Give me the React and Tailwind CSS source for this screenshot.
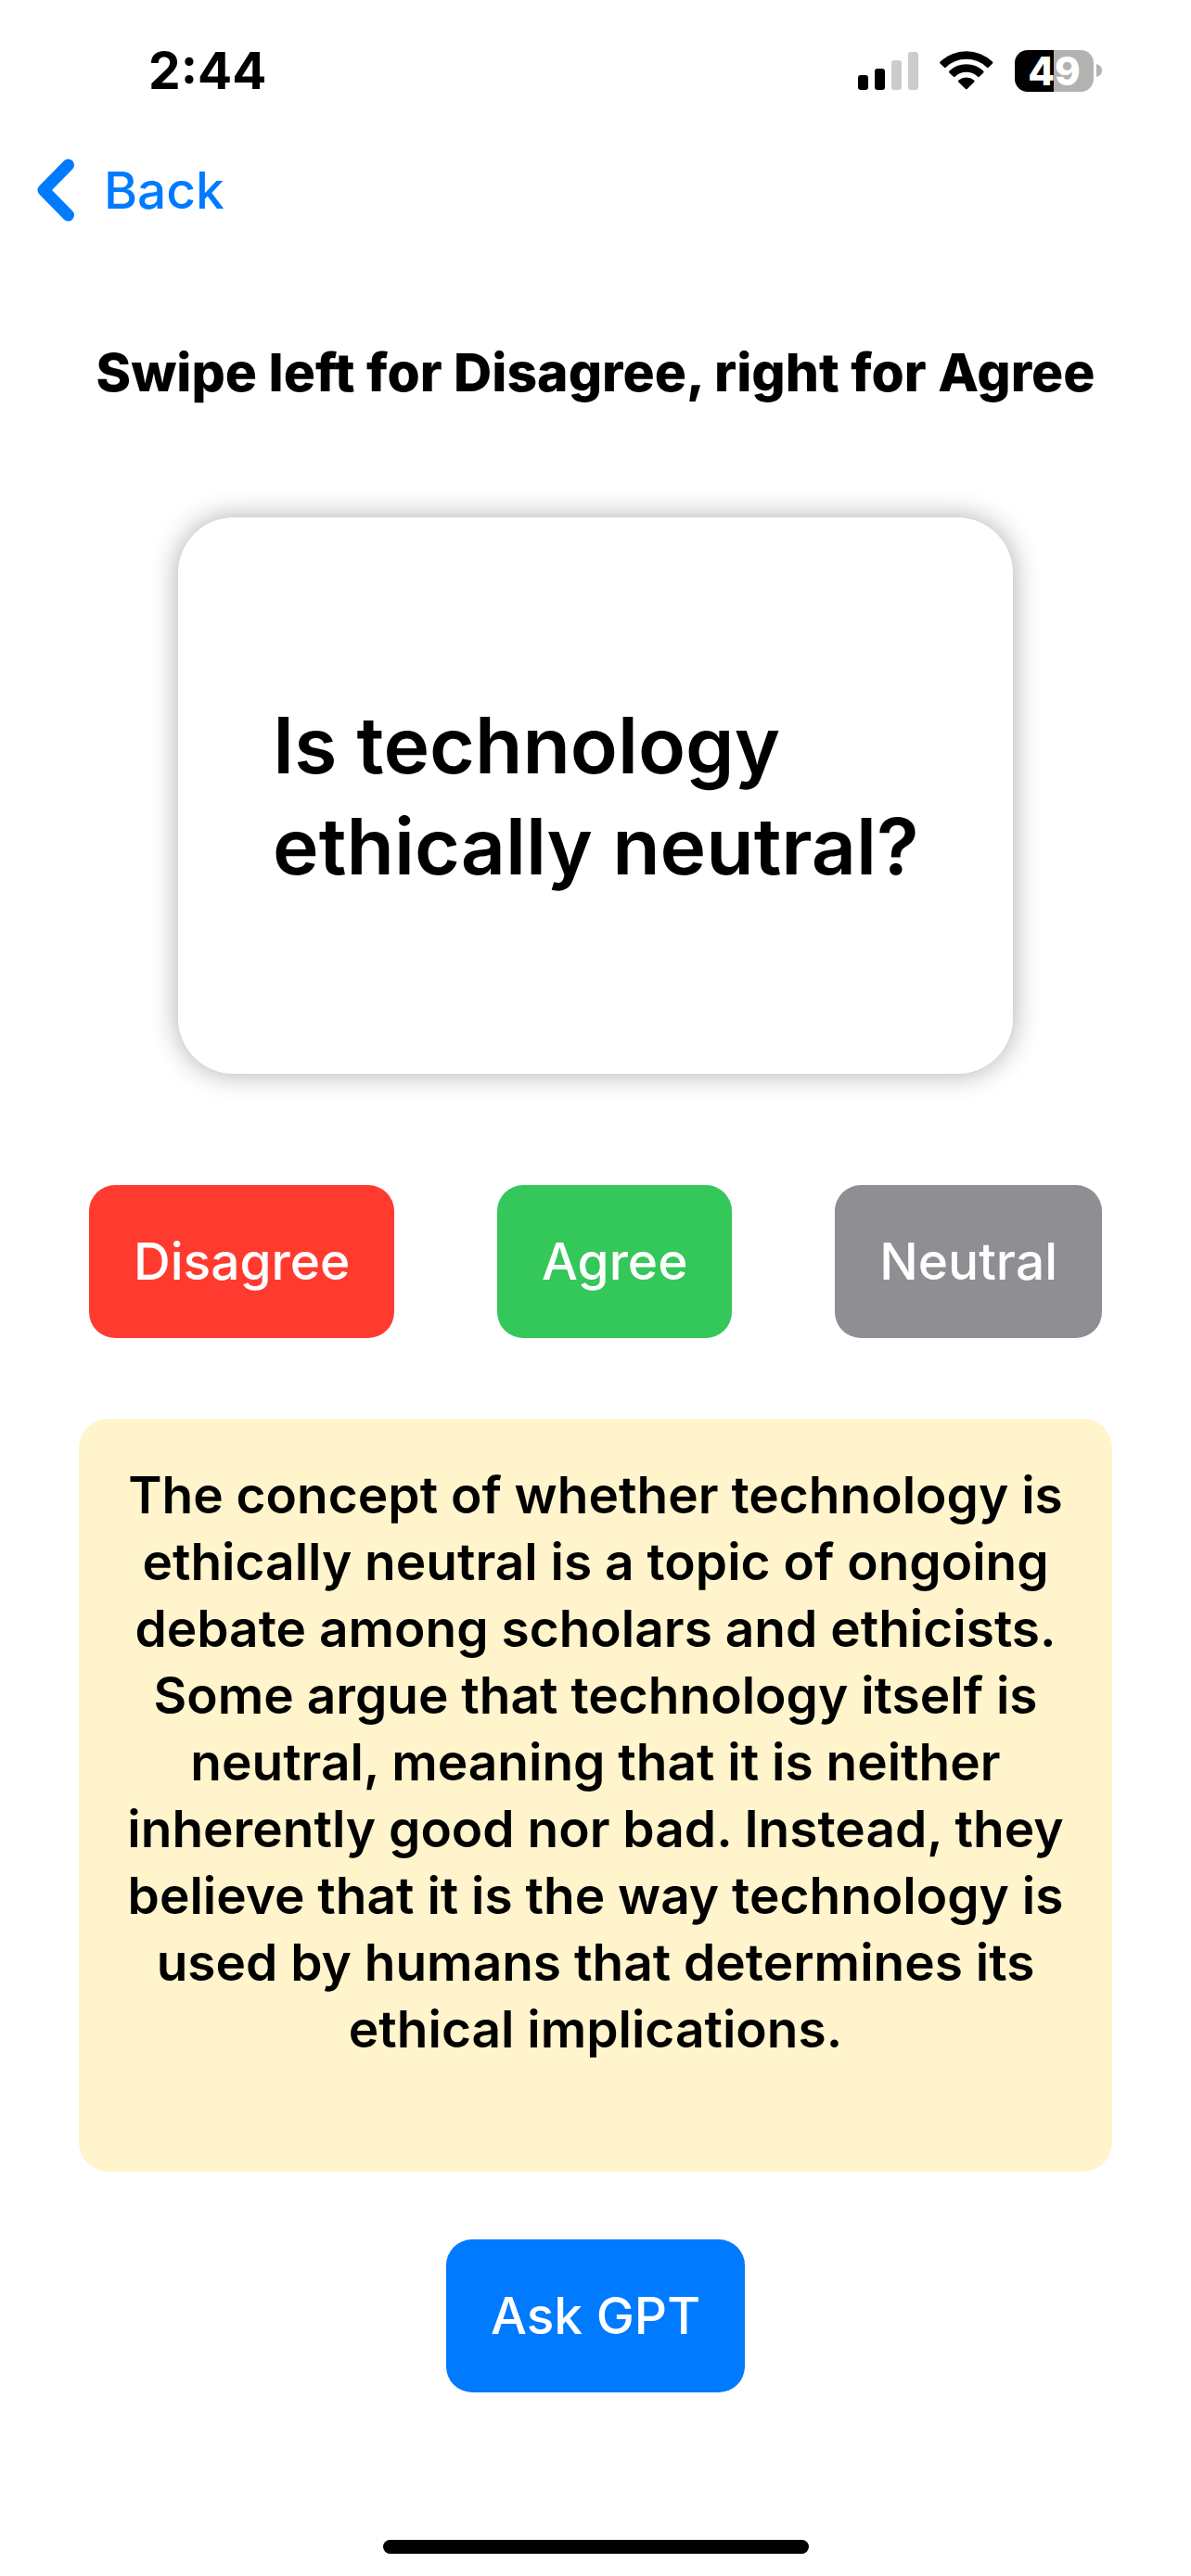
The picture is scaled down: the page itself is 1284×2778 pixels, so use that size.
import React, { useState } from "react";

function SignalIcon() {
  return (
    <svg width="65" height="41" viewBox="0 0 65 41" aria-hidden="true">
      <rect x="0" y="25" width="11" height="16" rx="3" fill="#000" />
      <rect x="18" y="18" width="11" height="23" rx="3" fill="#000" />
      <rect x="36" y="9" width="11" height="32" rx="3" fill="#ccc" />
      <rect x="54" y="0" width="11" height="41" rx="3" fill="#ccc" />
    </svg>
  );
}

function WifiIcon() {
  return (
    <svg width="58" height="42" viewBox="0 0 58 42" aria-hidden="true">
      <path d="M0.6 11.6 A40.5 40.5 0 0 1 57 11.6 Q57.8 12.5 57 13.4 L52.6 17.7 Q51.8 18.4 51 17.7 A32 32 0 0 0 6.6 17.7 Q5.8 18.4 5 17.7 L0.6 13.4 Q-0.2 12.5 0.6 11.6 Z" />
      <path d="M10.4 21.6 A26.5 26.5 0 0 1 47.2 21.6 Q48 22.5 47.2 23.4 L42.7 27.7 Q41.9 28.4 41.1 27.7 A18 18 0 0 0 16.5 27.7 Q15.7 28.4 14.9 27.7 L10.4 23.4 Q9.6 22.5 10.4 21.6 Z" />
      <path d="M20.4 31.6 A13 13 0 0 1 37.2 31.6 Q38 32.5 37.2 33.4 L29.6 40.9 Q28.8 41.6 28 40.9 L20.4 33.4 Q19.6 32.5 20.4 31.6 Z" />
    </svg>
  );
}

function Battery({ level }) {
  return (
    <div className="flex items-center gap-[3px]" role="img" aria-label={`Battery ${level}%`}>
      <div className="flex h-[45px] w-[85px] items-center justify-center rounded-[14px] bg-[linear-gradient(to_right,#000_42px,#b2b2b2_42px)]">
        <span className="text-[42px] leading-[45px] font-extrabold text-white">{level}</span>
      </div>
      <svg width="6" height="14" viewBox="0 0 6 14" aria-hidden="true">
        <path d="M0 0 C3.5 1 6 3.5 6 7 C6 10.5 3.5 13 0 14 Z" fill="#b2b2b2" />
      </svg>
    </div>
  );
}

const ANSWERS = [
  { label: "Disagree", color: "bg-[#ff3b30]" },
  { label: "Agree", color: "bg-[#34c759]" },
  { label: "Neutral", color: "bg-[#8e8e93]" },
];

function ActionButton({ color, children, ...props }) {
  return (
    <button
      type="button"
      className={`rounded-[28px] px-12 py-[46px] text-[55px] leading-[73px] font-medium text-white ${color}`}
      {...props}
    >
      {children}
    </button>
  );
}

export default function App() {
  const [, setAnswer] = useState(null);

  return (
    <div className="flex min-h-screen flex-col bg-white font-['Inter',sans-serif] text-black">
      <header>
        <div className="flex h-[152px] items-center justify-between pr-24 pl-[160px]">
          <time className="text-[55px] leading-[72px] font-bold">2:44</time>
          <div className="flex items-center gap-[23px]">
            <SignalIcon />
            <WifiIcon />
            <Battery level={49} />
          </div>
        </div>
        <nav className="flex h-[106px] items-center px-10">
          <a href="#back" className="flex items-center gap-8 text-[55px] leading-[72px] font-medium text-[#007aff]">
            <svg width="40" height="68" viewBox="0 0 40 68" fill="none" aria-hidden="true">
              <path d="M33.5 7 L7 34 L33.5 61" stroke="currentColor" strokeWidth="13" strokeLinecap="round" strokeLinejoin="round" />
            </svg>
            Back
          </a>
        </nav>
      </header>

      <main className="flex flex-col items-center">
        <h1 className="mt-[108px] text-center text-[57px] leading-[72px] font-extrabold">
          Swipe left for Disagree, right for Agree
        </h1>

        <section className="mt-[120px] flex min-h-[600px] w-full max-w-[900px] items-center rounded-[60px] bg-white pr-20 pl-[102px] shadow-[0_0_30px_rgba(0,0,0,0.33)]">
          <p className="text-[84px] leading-[109px] font-semibold">Is technology ethically neutral?</p>
        </section>

        <div className="mt-[120px] flex w-full items-center justify-between px-24">
          {ANSWERS.map(({ label, color }) => (
            <ActionButton key={label} color={color} onClick={() => setAnswer(label)}>
              {label}
            </ActionButton>
          ))}
        </div>

        <div className="mt-[87px] w-full px-[85px]">
          <section className="min-h-[812px] rounded-[32px] bg-[#fff4cc] px-10 pt-[46px] pb-24">
            <p className="text-center text-[55px] leading-[72px] font-semibold">
              The concept of whether technology is ethically neutral is a topic of ongoing debate among scholars and
              ethicists. Some argue that technology itself is neutral, meaning that it is neither inherently good nor
              bad. Instead, they believe that it is the way technology is used by humans that determines its ethical
              implications.
            </p>
          </section>
        </div>

        <div className="mt-[73px]">
          <ActionButton color="bg-[#007aff]">Ask GPT</ActionButton>
        </div>
      </main>

      <footer className="mt-auto flex justify-center pt-12 pb-6">
        <div className="h-[15px] w-[459px] rounded-full bg-black" />
      </footer>
    </div>
  );
}
